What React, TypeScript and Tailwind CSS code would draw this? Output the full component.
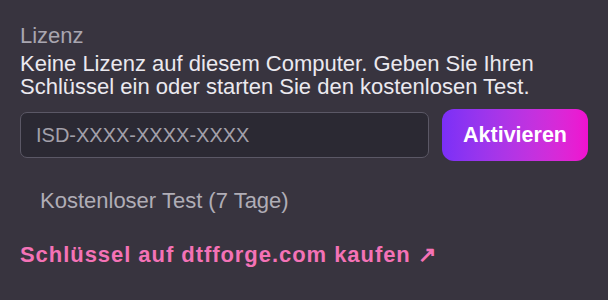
import React from "react";

export default function App() {
  return (
    <div
      className="w-full h-[300px] bg-[#38343f] px-5 pt-[24px]"
      style={{ fontFamily: '"Liberation Sans", Arial, sans-serif' }}
    >
      <div className="text-[22px] leading-[24px] text-[#a9a6b0]">Lizenz</div>
      <p className="mt-[4px] text-[22px] leading-[23px] text-[#ebe9ef]">
        Keine Lizenz auf diesem Computer. Geben Sie Ihren
        <br />
        Schlüssel ein oder starten Sie den kostenlosen Test.
      </p>
      <div className="mt-[11px] flex items-center gap-[13px]">
        <input
          type="text"
          placeholder="ISD-XXXX-XXXX-XXXX"
          className="flex-1 h-[46px] rounded-[7px] border-[1.5px] border-[#5b5866] bg-[#2b2933] pl-[15px] text-[20px] text-[#ebe9ef] placeholder:text-[#a3a0aa] outline-none"
          style={{ fontFamily: '"Liberation Sans", Arial, sans-serif' }}
        />
        <button
          className="h-[52px] w-[146px] rounded-[12px] bg-gradient-to-r from-[#7b2ff7] to-[#f010cf] text-[21.5px] font-bold leading-[24px] text-white"
          style={{ fontFamily: '"Liberation Sans", Arial, sans-serif' }}
        >
          Aktivieren
        </button>
      </div>
      <button
        className="mt-[16px] block px-5 py-3 text-[22px] leading-[24px] text-[#b0adb6]"
        style={{ fontFamily: '"Liberation Sans", Arial, sans-serif' }}
      >
        Kostenloser Test (7 Tage)
      </button>
      <a
        href="#"
        className="mt-[18px] block text-[22px] font-bold leading-[24px] tracking-[0.95px] text-[#f472b6]"
      >
        Schlüssel auf dtfforge.com kaufen ↗
      </a>
    </div>
  );
}
